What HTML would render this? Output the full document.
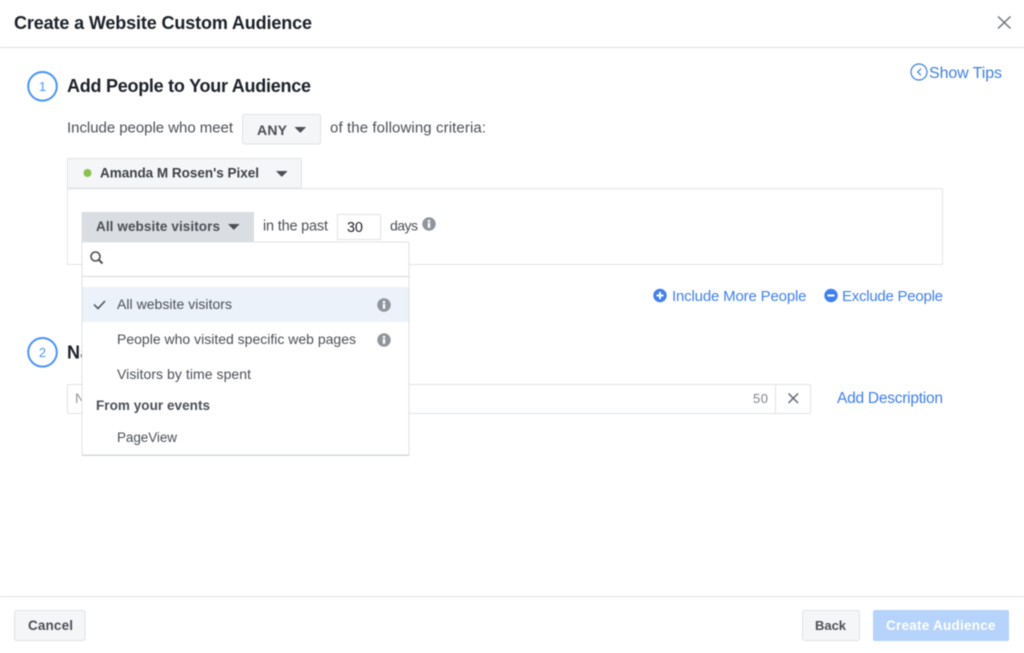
<!DOCTYPE html>
<html lang="en"><head><meta charset="utf-8"><title>Create a Website Custom Audience</title>
<style>
html,body{margin:0;padding:0;background:#fff;width:1024px;height:653px;overflow:hidden}
svg{display:block;filter:blur(.45px)}
text{font-family:"Liberation Sans",sans-serif;white-space:pre}
.t{font-size:14.500px;fill:#4b4f56}
.h{font-size:18px;font-weight:700;fill:#1d2129}
.b{font-size:13.500px;font-weight:700;fill:#4b4f56}
.l{font-size:15px;fill:#4080ee}
</style></head><body>
<svg width="1024" height="653" viewBox="0 0 1024 653" xmlns="http://www.w3.org/2000/svg">
<defs>
<g id="info"><circle r="6.700" fill="#90949c"/><rect x="-1.200" y="-1.200" width="2.400" height="5" fill="#fff"/><circle cy="-3" r="1.300" fill="#fff"/></g>
<path id="caret" d="M0 0h10.500q.5 0 .2 .5l-5 5q-.4 .4 -.8 0l-5 -5q-.3 -.5 .1 -.5z" fill="#4b4f56"/>
</defs>
<rect width="1024" height="653" fill="#fff"/>
<!-- header -->
<text x="14" y="29" class="h" textLength="298" lengthAdjust="spacing">Create a Website Custom Audience</text>
<rect x="0" y="47" width="1024" height="1" fill="#dcdee1"/>
<path d="M998 16.500L1010.500 28.500M1010.500 16.500L998 28.500" stroke="#70757c" stroke-width="1.500" fill="none"/>
<!-- show tips -->
<circle cx="919" cy="72" r="8" fill="none" stroke="#4080e0" stroke-width="1.200"/>
<path d="M921 68.700L917.700 72L921 75.300" fill="none" stroke="#4080e0" stroke-width="1.200"/>
<text x="929" y="78" style="font-size:16px" fill="#4080e0" textLength="73" lengthAdjust="spacing">Show Tips</text>
<!-- step 1 -->
<circle cx="42.500" cy="86.300" r="14.300" fill="#fff" stroke="#4a94f5" stroke-width="2"/>
<text x="42.500" y="91" text-anchor="middle" style="font-size:13px" fill="#4a94f5">1</text>
<text x="67" y="92" class="h" textLength="244" lengthAdjust="spacing">Add People to Your Audience</text>
<text x="67" y="132.500" class="t" style="font-size:15px" textLength="166" lengthAdjust="spacing">Include people who meet</text>
<rect x="242.500" y="114.500" width="78" height="29.500" rx="2" fill="#f5f6f7" stroke="#e0e2e5"/>
<text x="257" y="135" class="b" style="font-size:14px" textLength="30" lengthAdjust="spacing">ANY</text>
<use href="#caret" x="295" y="127"/>
<text x="330" y="132.500" class="t" style="font-size:15px" textLength="156" lengthAdjust="spacing">of the following criteria:</text>
<!-- criteria box -->
<rect x="67.500" y="189" width="875" height="75.500" fill="#fff" stroke="#e3e4e7"/>
<rect x="67" y="188" width="876" height="1.500" fill="#e9ebee"/>
<rect x="67.500" y="158.500" width="234" height="29.500" rx="1" fill="#f5f6f7" stroke="#e0e2e5"/>
<circle cx="87.500" cy="173" r="4" fill="#8cc152"/>
<text x="100" y="177.500" class="b" style="fill:#3c4046" textLength="159" lengthAdjust="spacing">Amanda M Rosen's Pixel</text>
<use href="#caret" x="276.500" y="171"/>
<rect x="81.500" y="212" width="172.500" height="30" rx="1" fill="#dadde1"/>
<text x="96" y="231" class="b" textLength="124" lengthAdjust="spacing">All website visitors</text>
<use href="#caret" x="228.500" y="224"/>
<text x="263" y="230.500" class="t" textLength="65" lengthAdjust="spacing">in the past</text>
<rect x="337.500" y="214.500" width="43" height="25" fill="#fff" stroke="#e0e2e5"/>
<text x="347" y="232" style="font-size:14.500px" fill="#1d2129" textLength="16" lengthAdjust="spacing">30</text>
<text x="390" y="230.500" class="t" style="font-size:14px" textLength="28" lengthAdjust="spacing">days</text>
<use href="#info" x="429" y="224"/>
<!-- links -->
<circle cx="660" cy="295.500" r="6.700" fill="#4080ee"/>
<path d="M656.500 295.500h7M660 292v7" stroke="#fff" stroke-width="2"/>
<text x="672" y="301" class="l" textLength="134.500" lengthAdjust="spacing">Include More People</text>
<circle cx="831" cy="295.500" r="6.700" fill="#4080ee"/>
<path d="M827.500 295.500h7" stroke="#fff" stroke-width="2"/>
<text x="842" y="301" class="l" textLength="101" lengthAdjust="spacing">Exclude People</text>
<!-- step 2 -->
<circle cx="42.500" cy="352.300" r="14.300" fill="#fff" stroke="#4a94f5" stroke-width="2"/>
<text x="42.500" y="357" text-anchor="middle" style="font-size:13px" fill="#4a94f5">2</text>
<text x="67" y="358.500" class="h" textLength="183" lengthAdjust="spacing">Name Your Audience</text>
<rect x="67.500" y="384.500" width="743" height="29" rx="1.500" fill="#fff" stroke="#e0e2e5"/>
<rect x="775" y="385" width="1" height="28" fill="#e0e2e5"/>
<text x="75" y="403" style="font-size:14px" fill="#90949c">Name</text>
<text x="753" y="403" style="font-size:13px" fill="#7f8389" textLength="15" lengthAdjust="spacing">50</text>
<path d="M788.500 393.500L798 403M798 393.500L788.500 403" stroke="#606770" stroke-width="1.500" fill="none"/>
<text x="837" y="403" class="l" style="font-size:15.500px" textLength="106" lengthAdjust="spacing">Add Description</text>
<!-- dropdown -->
<rect x="82" y="242" width="327" height="213.500" rx="1" fill="#fff" stroke="#dfe0e3" stroke-width="1"/>
<rect x="82" y="454.500" width="327" height="1.500" fill="#d5d7da"/>
<rect x="82.500" y="276" width="326" height="1" fill="#d5d7da"/>
<circle cx="95.500" cy="256.500" r="4.500" fill="none" stroke="#4b4f56" stroke-width="1.600"/>
<path d="M98.800 259.800L102.500 263.500" stroke="#4b4f56" stroke-width="2"/>
<rect x="82.500" y="287" width="326" height="35" fill="#ecf2fa"/>
<path d="M94 304.500L98 308.500L105 301" fill="none" stroke="#4b4f56" stroke-width="1.500"/>
<text x="117" y="309" class="t" style="font-size:14px" textLength="115" lengthAdjust="spacing">All website visitors</text>
<use href="#info" x="384" y="305"/>
<text x="117" y="344" class="t" style="font-size:14px" textLength="239" lengthAdjust="spacing">People who visited specific web pages</text>
<use href="#info" x="384" y="340"/>
<text x="117" y="379" class="t" style="font-size:14px" textLength="134" lengthAdjust="spacing">Visitors by time spent</text>
<text x="96" y="410" class="b" textLength="114" lengthAdjust="spacing">From your events</text>
<text x="117" y="442" class="t" style="font-size:13.500px" textLength="60" lengthAdjust="spacing">PageView</text>
<!-- footer -->
<rect x="0" y="596" width="1024" height="1" fill="#e0e2e5"/>
<rect x="14.500" y="610.500" width="70.500" height="30" rx="2" fill="#f5f6f7" stroke="#e0e2e5"/>
<text x="28" y="630" class="b" textLength="45" lengthAdjust="spacing">Cancel</text>
<rect x="802.500" y="610.500" width="57" height="30" rx="2" fill="#f5f6f7" stroke="#e0e2e5"/>
<text x="815" y="630" class="b" style="font-size:13px" textLength="31" lengthAdjust="spacing">Back</text>
<rect x="873" y="610" width="136" height="31" rx="2" fill="#b5d3fb"/>
<text x="886" y="630" class="b" style="fill:#fff" textLength="109.500" lengthAdjust="spacing">Create Audience</text>
</svg>
</body></html>
